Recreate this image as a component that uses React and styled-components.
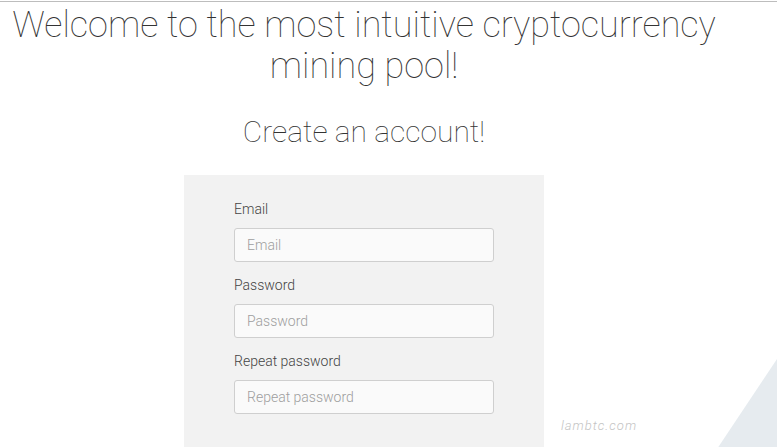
import React from "react";
import styled, { createGlobalStyle } from "styled-components";

const GlobalStyle = createGlobalStyle`
  html, body {
    margin: 0;
    padding: 0;
    background: #fff;
    font-family: Roboto, "Open Sans", sans-serif;
    overflow: hidden;
  }
`;

const fields = [
  { label: "Email", type: "email" },
  { label: "Password", type: "password" },
  { label: "Repeat password", type: "password" },
];

const App = () => {
  return (
    <>
      <GlobalStyle />
      <Page>
        <Main>
          <Title>Welcome to the most intuitive cryptocurrency mining pool!</Title>
          <Subtitle>Create an account!</Subtitle>
          <FormBox>
            {fields.map((f) => (
              <Field key={f.label}>
                <Label>{f.label}</Label>
                <Input type={f.type} placeholder={f.label} />
              </Field>
            ))}
          </FormBox>
        </Main>
        <Watermark>lambtc.com</Watermark>
        <Corner viewBox="0 0 60 90" preserveAspectRatio="none">
          <polygon points="0,90 60,0 60,90" fill="#e6ebef" />
        </Corner>
      </Page>
    </>
  );
};

const Page = styled.div`
  position: relative;
  height: 447px;
  border-top: 1px solid #bdbdbd;
  margin-top: 1px;
  overflow: hidden;
`;

const Main = styled.div`
  width: 728px;
  display: flex;
  flex-direction: column;
  align-items: center;
  position: relative;
  z-index: 1;
`;

const Title = styled.h1`
  margin: 0;
  padding: 3px 0 0;
  font-size: 36px;
  line-height: 41px;
  font-weight: 100;
  color: #333;
  text-align: center;
`;

const Subtitle = styled.h2`
  margin: 28px 0 0;
  font-size: 30px;
  line-height: 34px;
  font-weight: 100;
  color: #333;
  text-align: center;
`;

const FormBox = styled.div`
  margin-top: 26px;
  width: 360px;
  height: 300px;
  box-sizing: border-box;
  background: #f2f2f2;
  padding: 26px 50px 0;
  display: flex;
  flex-direction: column;
  gap: 15px;
`;

const Field = styled.div`
  display: flex;
  flex-direction: column;
  gap: 10px;
`;

const Label = styled.label`
  font-size: 14px;
  line-height: 17px;
  font-weight: 300;
  color: #444;
`;

const Input = styled.input`
  width: 260px;
  height: 34px;
  box-sizing: border-box;
  border: 1px solid #cfcfcf;
  border-radius: 3px;
  background: #fafafa;
  padding: 0 12px;
  font-family: Roboto, sans-serif;
  font-weight: 300;
  font-size: 14px;
  color: #444;
  outline: none;
  &::placeholder {
    color: #9e9e9e;
  }
`;

const Watermark = styled.span`
  position: absolute;
  left: 561px;
  top: 416px;
  font-size: 13px;
  font-style: italic;
  font-weight: 300;
  letter-spacing: 1px;
  color: #c4c4c4;
`;

const Corner = styled.svg`
  position: absolute;
  right: 0;
  bottom: 0;
  width: 60px;
  height: 90px;
`;

export default App;
